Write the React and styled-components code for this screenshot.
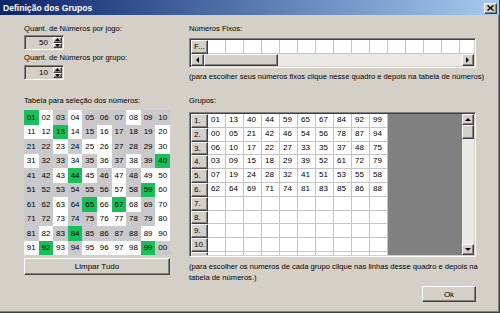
import React from 'react';
import styled, { createGlobalStyle } from 'styled-components';

const Global = createGlobalStyle`
  html, body { margin: 0; padding: 0; background: #d4d0c8; }
  body { font-family: "Liberation Sans", Arial, sans-serif; }
`;

const groups = [
  ['01', '13', '40', '44', '59', '65', '67', '84', '92', '99'],
  ['00', '05', '21', '42', '46', '54', '56', '78', '87', '94'],
  ['06', '10', '17', '22', '27', '33', '35', '37', '48', '75'],
  ['03', '09', '15', '18', '29', '39', '52', '61', '72', '79'],
  ['07', '19', '24', '28', '32', '41', '51', '53', '55', '58'],
  ['62', '64', '69', '71', '74', '81', '83', '85', '86', '88'],
];

const raised = `
  border-top: 1px solid #ffffff;
  border-left: 1px solid #ffffff;
  border-right: 1px solid #404040;
  border-bottom: 1px solid #404040;
  box-shadow: inset -1px -1px 0 #808080;
  background: #d4d0c8;
  box-sizing: border-box;
`;

const Window = styled.div`
  width: 500px;
  height: 313px;
  box-sizing: border-box;
  background: #d4d0c8;
  border-right: 1px solid #404040;
  border-bottom: 1px solid #404040;
  box-shadow: inset -1px -1px 0 #808080;
  display: flex;
  flex-direction: column;
  font-family: "Liberation Sans", Arial, sans-serif;
  font-size: 7.6px;
  color: #000;
  overflow: hidden;
`;

const TitleBar = styled.div`
  height: 15px;
  flex: none;
  display: flex;
  align-items: center;
  justify-content: space-between;
  padding: 0 2px 0 3px;
  background: linear-gradient(to right, #0a246a, #a6caf0);
  color: #fff;
  font-weight: bold;
  font-size: 8.6px;
`;

const CloseBtn = styled.div`
  ${raised}
  width: 13px;
  height: 11px;
  margin-top: 1px;
  display: flex;
  align-items: center;
  justify-content: center;
`;

const Body = styled.div`
  display: flex;
  padding: 9px 0 0 24px;
`;

const LeftCol = styled.div`
  width: 146px;
  display: flex;
  flex-direction: column;
`;

const RightCol = styled.div`
  width: 287px;
  margin-left: 19px;
  display: flex;
  flex-direction: column;
`;

const Label = styled.div`
  line-height: ${p => p.$lh || 10}px;
  margin-top: ${p => p.$mt || 0}px;
  white-space: nowrap;
`;

const Sunken = styled.div`
  box-sizing: border-box;
  border-top: 1px solid #808080;
  border-left: 1px solid #808080;
  border-right: 1px solid #ffffff;
  border-bottom: 1px solid #ffffff;
  box-shadow: inset 1px 1px 0 #404040, inset -1px -1px 0 #d4d0c8;
  padding: 1px;
`;

const SpinBox = styled(Sunken)`
  width: 40px;
  height: 15px;
  margin-top: ${p => p.$mt}px;
  display: flex;
`;

const SpinValue = styled.div`
  flex: 1;
  text-align: right;
  padding-right: 5px;
  line-height: 11px;
  font-size: 8px;
`;

const SpinButtons = styled.div`
  width: 9px;
  display: flex;
  flex-direction: column;
`;

const SpinBtn = styled.div`
  ${raised}
  flex: 1;
  display: flex;
  align-items: center;
  justify-content: center;
`;

const NumGrid = styled.div`
  margin-top: 4px;
  width: 146px;
  height: 145px;
  display: grid;
  grid-template-columns: repeat(10, 1fr);
  grid-template-rows: repeat(10, 1fr);
`;

const NumCell = styled.div`
  background: ${p => (p.$state === 'sel' ? '#19bf5b' : p.$state === 'used' ? '#c9c9cb' : '#ffffff')};
  display: flex;
  align-items: center;
  justify-content: center;
  font-size: 8px;
`;

const Button = styled.div`
  ${raised}
  width: ${p => (p.$w ? `${p.$w}px` : 'auto')};
  height: ${p => p.$h}px;
  margin-top: 3px;
  align-self: ${p => p.$align || 'stretch'};
  display: flex;
  align-items: center;
  justify-content: center;
  font-size: 8px;
`;

const FixedBox = styled(Sunken)`
  margin-top: 4px;
  height: 30px;
  display: flex;
  flex-direction: column;
`;

const FixedRow = styled.div`
  height: 14px;
  display: flex;
  overflow: hidden;
  background: #fff;
  flex: none;
`;

const HeadCell = styled.div`
  ${raised}
  width: 17px;
  flex: none;
  height: ${p => p.$h || 14}px;
  padding-left: 2px;
  line-height: 12px;
  font-size: 8px;
  white-space: nowrap;
  overflow: hidden;
`;

const DataCell = styled.div`
  width: 18px;
  flex: none;
  box-sizing: border-box;
  border-right: 1px solid #c4c4c4;
  border-bottom: 1px solid #c4c4c4;
  background: #fff;
  padding-left: 3px;
  font-size: 8px;
  line-height: 12px;
`;

const HScroll = styled.div`
  height: 12px;
  display: flex;
  background: #ebe9e5;
`;

const ScrollArrow = styled.div`
  ${raised}
  width: ${p => p.$w || 12}px;
  height: ${p => p.$h || 12}px;
  flex: none;
  display: flex;
  align-items: center;
  justify-content: center;
`;

const Thumb = styled.div`
  ${raised}
  width: ${p => p.$w || 12}px;
  height: ${p => p.$h || 12}px;
  flex: none;
`;

const Track = styled.div`
  flex: 1;
`;

const GroupBox = styled(Sunken)`
  margin-top: 6px;
  height: 145px;
  display: flex;
`;

const GridArea = styled.div`
  flex: 1;
  background: #808080;
  overflow: hidden;
  display: flex;
  flex-direction: column;
`;

const GroupRow = styled.div`
  height: 13.8px;
  flex: none;
  display: flex;
`;

const VScroll = styled.div`
  width: 12px;
  display: flex;
  flex-direction: column;
  background: #ebe9e5;
`;

const Tri = ({ dir }) => {
  const pts = {
    up: '0,3 3,0 6,3',
    down: '0,0 3,3 6,0',
    left: '3,0 0,3 3,6',
    right: '0,0 3,3 0,6',
  }[dir];
  const vert = dir === 'up' || dir === 'down';
  return (
    <svg width={vert ? 6 : 4} height={vert ? 4 : 6} viewBox={vert ? '0 0 6 4' : '0 0 4 6'}>
      <polygon points={pts} fill="#000" />
    </svg>
  );
};

const SmallTri = ({ dir }) => (
  <svg width="5" height="3" viewBox="0 0 5 3">
    <polygon points={dir === 'up' ? '0,3 2.5,0 5,3' : '0,0 2.5,3 5,0'} fill="#000" />
  </svg>
);

const Spin = ({ value, mt }) => (
  <SpinBox $mt={mt}>
    <SpinValue>{value}</SpinValue>
    <SpinButtons>
      <SpinBtn><SmallTri dir="up" /></SpinBtn>
      <SpinBtn><SmallTri dir="down" /></SpinBtn>
    </SpinButtons>
  </SpinBox>
);

export default function App() {
  const selected = new Set(groups[0]);
  const used = new Set(groups.slice(1).flat());
  const nums = Array.from({ length: 100 }, (_, i) => String((i + 1) % 100).padStart(2, '0'));
  const rows = Array.from({ length: 11 }, (_, i) => groups[i] || Array(10).fill(''));

  return (
    <>
      <Global />
      <Window>
        <TitleBar>
          <span>Definição dos Grupos</span>
          <CloseBtn>
            <svg width="7" height="6" viewBox="0 0 7 6">
              <path d="M0.5 0.5 L6.5 5.5 M6.5 0.5 L0.5 5.5" stroke="#000" strokeWidth="1.4" />
            </svg>
          </CloseBtn>
        </TitleBar>
        <Body>
          <LeftCol>
            <Label>Quant. de Números por jogo:</Label>
            <Spin value="50" mt={1} />
            <Label $mt={3}>Quant. de Números por grupo:</Label>
            <Spin value="10" mt={2} />
            <Label $mt={16}>Tabela para seleção dos números:</Label>
            <NumGrid>
              {nums.map(n => (
                <NumCell key={n} $state={selected.has(n) ? 'sel' : used.has(n) ? 'used' : 'free'}>
                  {n}
                </NumCell>
              ))}
            </NumGrid>
            <Button $h={17}>Limpar Tudo</Button>
          </LeftCol>
          <RightCol>
            <Label>Números Fixos:</Label>
            <FixedBox>
              <FixedRow>
                <HeadCell>F...</HeadCell>
                {Array.from({ length: 15 }, (_, i) => (
                  <DataCell key={i} />
                ))}
              </FixedRow>
              <HScroll>
                <ScrollArrow $w={13}><Tri dir="left" /></ScrollArrow>
                <Thumb $w={74} />
                <Track />
                <ScrollArrow><Tri dir="right" /></ScrollArrow>
              </HScroll>
            </FixedBox>
            <Label $mt={4}>(para escolher seus números fixos clique nesse quadro e depois na tabela de números)</Label>
            <Label $mt={14}>Grupos:</Label>
            <GroupBox>
              <GridArea>
                {rows.map((r, i) => (
                  <GroupRow key={i}>
                    <HeadCell $h={13.8}>{i < 10 ? `${i + 1}.` : ''}</HeadCell>
                    {r.map((v, j) => (
                      <DataCell key={j}>{v}</DataCell>
                    ))}
                  </GroupRow>
                ))}
              </GridArea>
              <VScroll>
                <ScrollArrow $h={11}><Tri dir="up" /></ScrollArrow>
                <Thumb $h={14} />
                <Track />
                <ScrollArrow $h={11}><Tri dir="down" /></ScrollArrow>
              </VScroll>
            </GroupBox>
            <Label $mt={4} $lh={11}>
              (para escolher os numeros de cada grupo clique nas linhas desse quadro e depois na
              <br />
              tabela de números.)
            </Label>
            <Button $w={54} $h={16} $align="flex-end">Ok</Button>
          </RightCol>
        </Body>
      </Window>
    </>
  );
}
